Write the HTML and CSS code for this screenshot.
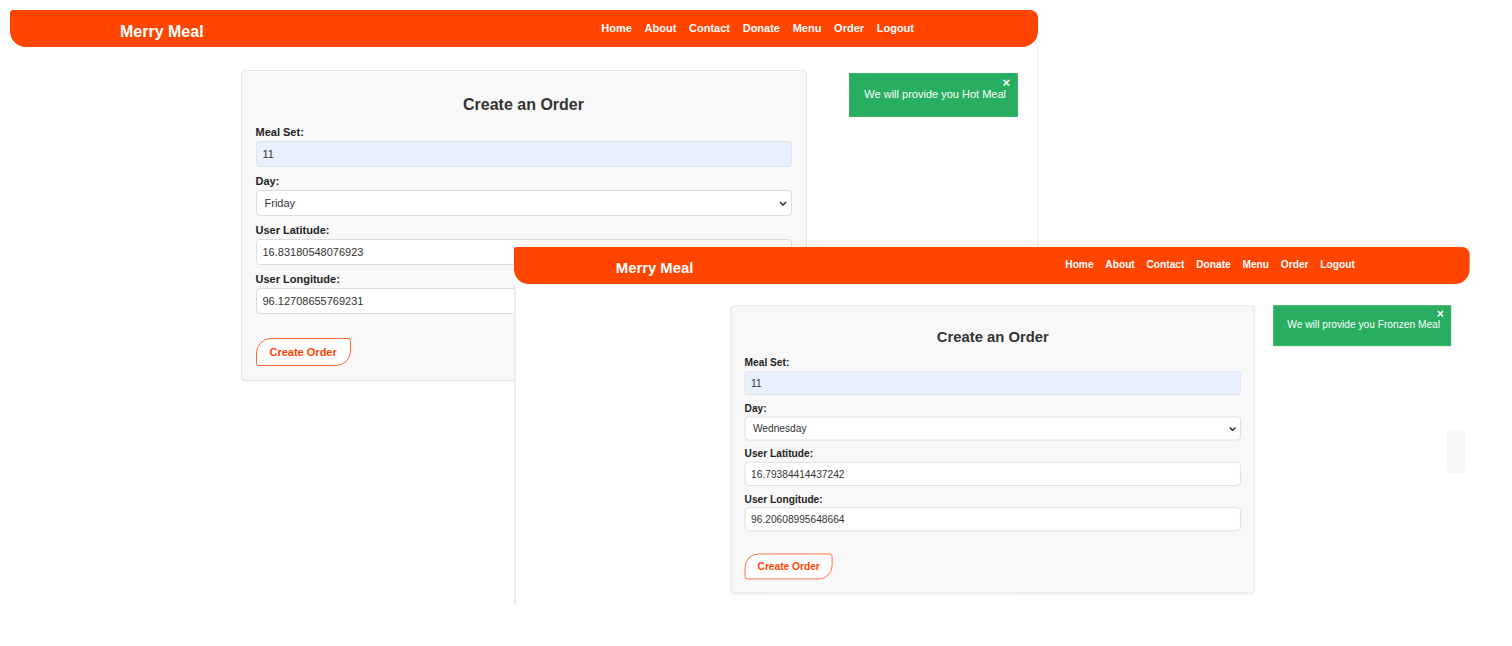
FILE: index.html
```html
<!DOCTYPE html>
<html lang="en">
<head>
<meta charset="utf-8">
<title>Merry Meal - Create an Order</title>
<link rel="stylesheet" href="styles.css">
</head>
<body>
<div class="canvas">

  <section class="shot shot-1">
    <nav class="nav">
      <div class="nav-inner">
        <span class="brand">Merry Meal</span>
        <ul class="links">
          <li>Home</li><li>About</li><li>Contact</li><li>Donate</li><li>Menu</li><li>Order</li><li>Logout</li>
        </ul>
      </div>
    </nav>
    <main class="page">
      <form class="card">
        <h2 class="card-title">Create an Order</h2>
        <div class="group">
          <label class="label">Meal Set:</label>
          <input class="field autofill" type="text" value="11">
        </div>
        <div class="group">
          <label class="label">Day:</label>
          <div class="select-wrap">
            <select class="field select"><option>Friday</option></select>
            <svg class="chev" width="8" height="5" viewBox="0 0 8 5"><path d="M1 1 L4 4 L7 1" fill="none" stroke="#333" stroke-width="1.6"/></svg>
          </div>
        </div>
        <div class="group">
          <label class="label">User Latitude:</label>
          <input class="field" type="text" value="16.83180548076923">
        </div>
        <div class="group">
          <label class="label">User Longitude:</label>
          <input class="field" type="text" value="96.12708655769231">
        </div>
        <button class="btn" type="button">Create Order</button>
      </form>
    </main>
    <div class="toast">
      <span class="toast-close">×</span>
      <span class="toast-msg">We will provide you Hot Meal</span>
    </div>
  </section>

  <section class="shot shot-2">
    <nav class="nav">
      <div class="nav-inner">
        <span class="brand">Merry Meal</span>
        <ul class="links">
          <li>Home</li><li>About</li><li>Contact</li><li>Donate</li><li>Menu</li><li>Order</li><li>Logout</li>
        </ul>
      </div>
    </nav>
    <main class="page">
      <form class="card">
        <h2 class="card-title">Create an Order</h2>
        <div class="group">
          <label class="label">Meal Set:</label>
          <input class="field autofill" type="text" value="11">
        </div>
        <div class="group">
          <label class="label">Day:</label>
          <div class="select-wrap">
            <select class="field select"><option>Wednesday</option></select>
            <svg class="chev" width="8" height="5" viewBox="0 0 8 5"><path d="M1 1 L4 4 L7 1" fill="none" stroke="#333" stroke-width="1.6"/></svg>
          </div>
        </div>
        <div class="group">
          <label class="label">User Latitude:</label>
          <input class="field" type="text" value="16.79384414437242">
        </div>
        <div class="group">
          <label class="label">User Longitude:</label>
          <input class="field" type="text" value="96.20608995648664">
        </div>
        <button class="btn" type="button">Create Order</button>
      </form>
    </main>
    <div class="toast">
      <span class="toast-close">×</span>
      <span class="toast-msg">We will provide you Fronzen Meal</span>
    </div>
  </section>

  <div class="ghost"></div>
</div>
</body>
</html>
```
FILE: styles.css
```css
* { box-sizing: border-box; }

html, body {
  margin: 0;
  padding: 0;
  background: #fff;
}

body {
  font-family: "Liberation Sans", Arial, sans-serif;
  color: #222;
}

.canvas {
  position: relative;
  width: 1512px;
  height: 646px;
  overflow: hidden;
  background: #fff;
}

/* screenshot windows placed on the collage canvas */
.shot {
  position: absolute;
  background: #fff;
  display: flex;
  flex-direction: column;
}

.shot-1 {
  left: 10px;
  top: 10px;
  width: 1028px;
  height: 560px;
}

.shot-1 .page {
  border-right: 1px solid #ececec;
}

.shot-2 {
  left: 514px;
  top: 246.5px;
  width: 1032px;
  height: 387px;
  transform: scale(0.926);
  transform-origin: 0 0;
}

.shot-2 .page {
  border-left: 2px solid #ececec;
}

.shot-2 .nav {
  height: 39.5px;
}

/* navigation */
.nav {
  flex: none;
  height: 37px;
  background: #ff4500;
  border-radius: 3px 8px 16px 16px;
  display: flex;
  align-items: center;
}

.nav-inner {
  flex: 1;
  padding: 0 124px 0 110px;
  display: flex;
  justify-content: space-between;
  align-items: center;
}

.brand {
  color: #fff;
  font-weight: bold;
  font-size: 16px;
  line-height: 18px;
  padding-top: 7px;
}

.links {
  list-style: none;
  margin: 0;
  padding: 0;
  display: flex;
  gap: 12.7px;
  color: #fff;
  font-weight: bold;
  font-size: 11px;
  line-height: 13px;
}

/* page content */
.page {
  flex: 1;
  padding-top: 23px;
}

.card {
  width: 566px;
  margin: 0 auto;
  background: #f8f8f8;
  border: 1px solid #e4e4e4;
  border-radius: 4px;
  padding: 24px 14px 14px;
  box-shadow: 0 1px 2px rgba(0, 0, 0, 0.04);
}

.card-title {
  margin: 0 0 11px;
  text-align: center;
  font-size: 16px;
  line-height: 19px;
  font-weight: bold;
  color: #333;
}

.group {
  margin-bottom: 7px;
}

.label {
  display: block;
  font-size: 11px;
  line-height: 14px;
  font-weight: bold;
  color: #222;
  margin-bottom: 2px;
}

.field {
  display: block;
  width: 100%;
  height: 26px;
  margin: 0;
  padding: 0 6px;
  border: 1px solid #dcdcdc;
  border-radius: 4px;
  background: #fff;
  font-family: "Liberation Sans", Arial, sans-serif;
  font-size: 11px;
  color: #333;
  outline: none;
}

.autofill {
  background: #e8f0fe;
  border-color: #dde3ee;
}

.select-wrap {
  position: relative;
}

.select {
  appearance: none;
  -webkit-appearance: none;
  padding-left: 8px;
}

.chev {
  position: absolute;
  right: 5px;
  top: 11px;
  pointer-events: none;
}

.btn {
  display: block;
  margin-top: 24px;
  height: 28px;
  padding: 0 13px;
  background: #fff;
  border: 1.5px solid #ff6a35;
  border-radius: 15px 3px 15px 3px;
  color: #ff4500;
  font-family: "Liberation Sans", Arial, sans-serif;
  font-size: 11px;
  font-weight: bold;
}

/* notification toast, floating over the page */
.toast {
  position: absolute;
  top: 63px;
  right: 20px;
  height: 44px;
  padding: 4px 7px 0 14px;
  background: #27ae60;
  color: #fff;
  border: 1px solid #3bb56d;
}

.toast-close {
  display: block;
  text-align: right;
  font-size: 13px;
  font-weight: bold;
  line-height: 10px;
}

.toast-msg {
  display: block;
  font-size: 11px;
  line-height: 13px;
  padding-right: 4px;
  white-space: nowrap;
}

.ghost {
  position: absolute;
  left: 1447px;
  top: 430px;
  width: 18px;
  height: 43px;
  background: #f6f6f6;
  border-radius: 4px;
}
```
